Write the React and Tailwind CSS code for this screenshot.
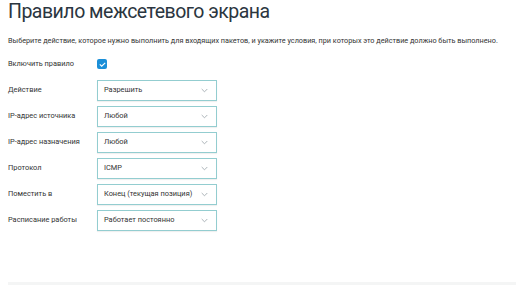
const ROWS = [
  { label: 'Действие', value: 'Разрешить' },
  { label: 'IP-адрес источника', value: 'Любой' },
  { label: 'IP-адрес назначения', value: 'Любой' },
  { label: 'Протокол', value: 'ICMP' },
  { label: 'Поместить в', value: 'Конец (текущая позиция)' },
  { label: 'Расписание работы', value: 'Работает постоянно' },
]

function Chevron() {
  return (
    <svg width="7" height="5" viewBox="0 0 7 5" className="shrink-0">
      <path d="M0.7 1 L3.5 3.8 L6.3 1" fill="none" stroke="#a3abb1" strokeWidth="0.9" />
    </svg>
  )
}

function SelectBox({ value }) {
  return (
    <div className="flex h-[21px] w-[120px] items-center justify-between border border-[#93cdd0] bg-white pl-[6px] pr-[8px] shadow-[0_1px_1px_rgba(0,0,0,0.06)]">
      <span className="text-[7.4px] text-[#333]">{value}</span>
      <Chevron />
    </div>
  )
}

export default function App() {
  return (
    <div className="h-[290px] w-[516px] bg-white pl-2 font-['Roboto',sans-serif] text-[#333]">
      <h1 className="h-[24px] text-[19.5px] leading-[24px] tracking-[-0.5px] text-[#2b3640]">Правило межсетевого экрана</h1>

      <p className="mt-[11.5px] h-[10px] text-[7.28px] leading-[10px] text-[#333]">
        Выберите действие, которое нужно выполнить для входящих пакетов, и укажите условия, при которых это действие должно быть выполнено.
      </p>

      <div className="mt-[5.5px] flex flex-col">
        <div className="flex h-[26px] items-center">
          <span className="w-[89px] text-[7.4px]">Включить правило</span>
          <div className="flex h-[10px] w-[10px] items-center justify-center rounded-[2px] bg-[#1b8fd8]">
            <svg width="7" height="5" viewBox="0 0 7 5">
              <path d="M0.8 2.4 L2.7 4.2 L6.2 0.8" fill="none" stroke="white" strokeWidth="1.1" />
            </svg>
          </div>
        </div>
        {ROWS.map((r) => (
          <div key={r.label} className="flex h-[26px] items-center">
            <span className="w-[89px] text-[7.4px]">{r.label}</span>
            <SelectBox value={r.value} />
          </div>
        ))}
      </div>

      <div className="mt-[49px] h-[3px] bg-[#f4f5f5]" />
    </div>
  )
}
